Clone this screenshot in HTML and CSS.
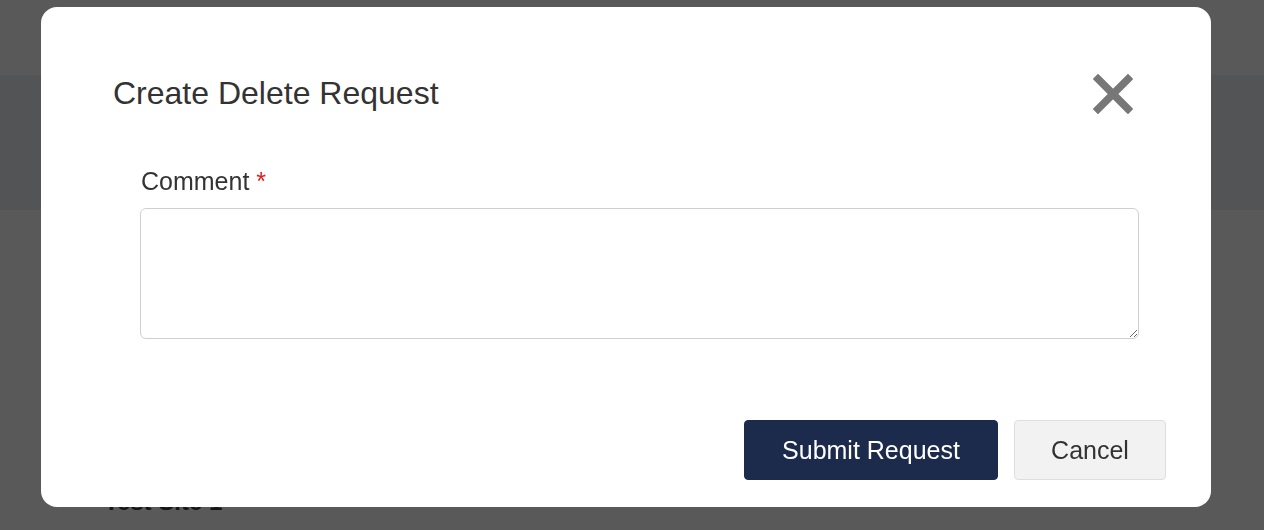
FILE: index.html
```html
<!DOCTYPE html>
<html lang="en">
<head>
<meta charset="utf-8">
<title>Create Delete Request</title>
<link rel="stylesheet" href="styles.css">
</head>
<body>
<div class="page">
  <div class="topbar"></div>
  <div class="band"></div>
  <div class="content">
    <div class="site-name">Test Site 1</div>
  </div>
</div>
<div class="modal" role="dialog" aria-labelledby="modal-title">
  <div class="modal-header">
    <h2 id="modal-title" class="modal-title">Create Delete Request</h2>
    <button class="close-btn" aria-label="Close">
      <svg width="40" height="40" viewBox="0 0 40 40"><path d="M5 5 L35 35 M35 5 L5 35" stroke="#777" stroke-width="7.5" stroke-linecap="square" fill="none"/></svg>
    </button>
  </div>
  <div class="modal-body">
    <label class="field-label" for="comment">Comment <span class="req">*</span></label>
    <textarea id="comment" class="field-input"></textarea>
  </div>
  <div class="modal-footer">
    <button class="btn btn-primary">Submit Request</button>
    <button class="btn btn-secondary">Cancel</button>
  </div>
</div>
</body>
</html>
```

FILE: styles.css
```css
* { box-sizing: border-box; }
html, body { margin: 0; padding: 0; }
body {
  font-family: "Liberation Sans", Arial, Helvetica, sans-serif;
  background: #595959;
  width: 1264px;
  height: 530px;
  overflow: hidden;
}
.page { display: flex; flex-direction: column; }
.topbar { height: 75px; background: #595959; }
.band { height: 135px; background: #535455; }
.content {
  padding: 277px 0 0 104px;
}
.site-name {
  font-size: 24px;
  line-height: 30px;
  font-weight: bold;
  color: #151515;
}
.modal {
  position: fixed;
  left: 41px;
  top: 7px;
  width: 1170px;
  height: 500px;
  background: #fff;
  border-radius: 16px;
  display: flex;
  flex-direction: column;
}
.modal-header {
  display: flex;
  justify-content: space-between;
  align-items: flex-start;
  padding: 66px 78px 0 72px;
}
.modal-title {
  margin: 0;
  font-size: 32px;
  line-height: 40px;
  font-weight: normal;
  color: #333;
}
.close-btn {
  border: 0;
  background: none;
  padding: 0;
  margin-top: 1px;
  width: 40px;
  height: 40px;
  display: block;
  cursor: pointer;
}
.close-btn svg { display: block; }
.modal-body {
  display: flex;
  flex-direction: column;
  padding: 52px 72px 0 99px;
}
.field-label {
  font-size: 25px;
  line-height: 30px;
  color: #333;
  margin-left: 1px;
}
.req { color: #e01b1b; }
.field-input {
  margin-top: 12px;
  width: 999px;
  height: 131px;
  border: 1px solid #cfcfcf;
  border-radius: 6px;
  resize: both;
  font-family: inherit;
  font-size: 20px;
  padding: 8px 12px;
}
.modal-footer {
  display: flex;
  justify-content: flex-end;
  gap: 16px;
  padding: 81px 45px 0 0;
}
.btn {
  height: 60px;
  font-family: inherit;
  font-size: 25px;
  border-radius: 4px;
  cursor: pointer;
}
.btn-primary {
  width: 254px;
  background: #1c2a4b;
  color: #fff;
  border: 1px solid #1c2a4b;
}
.btn-secondary {
  width: 152px;
  background: #f2f2f2;
  color: #333;
  border: 1px solid #dedede;
}
```
